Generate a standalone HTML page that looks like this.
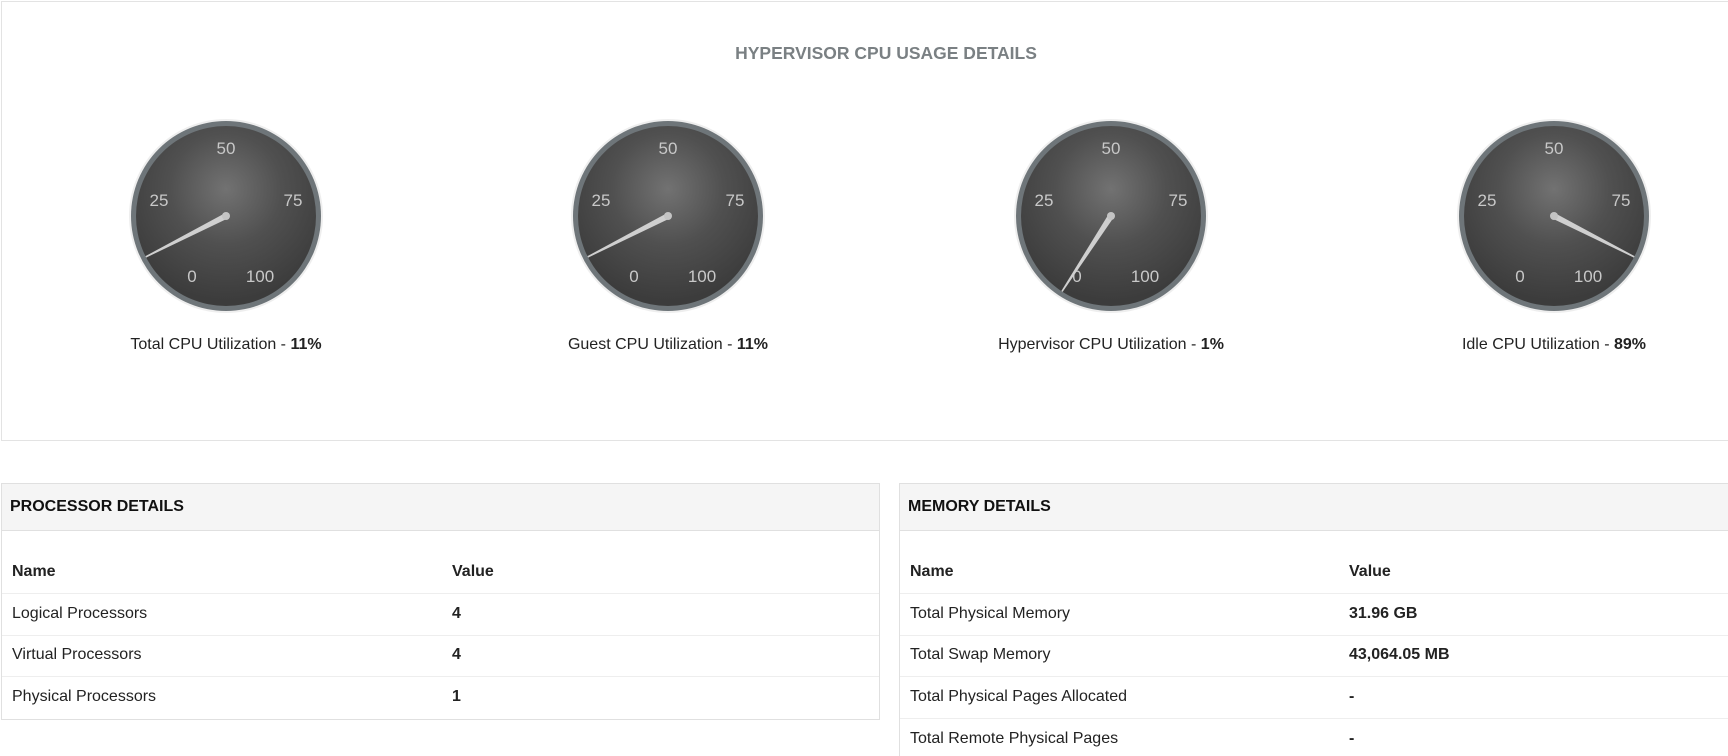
<!DOCTYPE html>
<html style="height:756px;overflow:hidden"><head><meta charset="utf-8"><style>
*{margin:0;padding:0;box-sizing:border-box}
body{width:1728px;height:756px;overflow:hidden;background:#fff;font-family:"Liberation Sans",Arial,sans-serif;color:#222;position:relative}
.top{position:absolute;left:1px;top:1px;width:1740px;height:440px;border:1px solid #e3e3e3}
.title{position:absolute;left:0;width:1772px;top:43px;text-align:center;font-weight:bold;font-size:17.5px;color:#7a8083}
.g{position:absolute;top:116px;width:200px;height:200px}
.lab{position:absolute;top:336px;width:400px;text-align:center;font-size:16px;color:#222}
.panel{position:absolute;top:483px;border:1px solid #e0e0e0;background:#fff;overflow:hidden}
.hd{height:47px;background:#f5f5f5;border-bottom:1px solid #e0e0e0;font-weight:bold;font-size:16px;line-height:45px;padding-left:8px;color:#111}
.row{position:absolute;left:0;right:0;height:42px;border-bottom:1px solid #eee;font-size:16px}
.row span{position:absolute;top:11px}
.b{font-weight:bold}
</style></head><body>
<div class="top"></div>
<div class="title">HYPERVISOR CPU USAGE DETAILS</div>

<svg width="0" height="0" style="position:absolute"><defs>
<radialGradient id="face" cx="50%" cy="35%" r="62%"><stop offset="0" stop-color="#727272"/><stop offset="0.5" stop-color="#505050"/><stop offset="1" stop-color="#3c3c3c"/></radialGradient>
</defs></svg>

<svg class="g" style="left:126px" viewBox="-100 -100 200 200">
<circle r="97" fill="#ddd" opacity=".5"/><circle r="95" fill="#6e7579"/><circle r="90" fill="url(#face)"/>
<g fill="#c8c8c8" font-size="17" text-anchor="middle" font-family="Liberation Sans,sans-serif"><text y="-62">50</text><text x="-67" y="-10">25</text><text x="67" y="-10">75</text><text x="-34" y="66">0</text><text x="34" y="66">100</text></g>
<g transform="rotate(243)"><polygon points="-3,0 3,0 0.8,-90 -0.8,-90" fill="#cfcfcf"/></g><circle r="4" fill="#c4c4c4"/>
</svg>
<svg class="g" style="left:568px" viewBox="-100 -100 200 200">
<circle r="97" fill="#ddd" opacity=".5"/><circle r="95" fill="#6e7579"/><circle r="90" fill="url(#face)"/>
<g fill="#c8c8c8" font-size="17" text-anchor="middle" font-family="Liberation Sans,sans-serif"><text y="-62">50</text><text x="-67" y="-10">25</text><text x="67" y="-10">75</text><text x="-34" y="66">0</text><text x="34" y="66">100</text></g>
<g transform="rotate(243)"><polygon points="-3,0 3,0 0.8,-90 -0.8,-90" fill="#cfcfcf"/></g><circle r="4" fill="#c4c4c4"/>
</svg>
<svg class="g" style="left:1011px" viewBox="-100 -100 200 200">
<circle r="97" fill="#ddd" opacity=".5"/><circle r="95" fill="#6e7579"/><circle r="90" fill="url(#face)"/>
<g fill="#c8c8c8" font-size="17" text-anchor="middle" font-family="Liberation Sans,sans-serif"><text y="-62">50</text><text x="-67" y="-10">25</text><text x="67" y="-10">75</text><text x="-34" y="66">0</text><text x="34" y="66">100</text></g>
<g transform="rotate(213)"><polygon points="-3,0 3,0 0.8,-90 -0.8,-90" fill="#cfcfcf"/></g><circle r="4" fill="#c4c4c4"/>
</svg>
<svg class="g" style="left:1454px" viewBox="-100 -100 200 200">
<circle r="97" fill="#ddd" opacity=".5"/><circle r="95" fill="#6e7579"/><circle r="90" fill="url(#face)"/>
<g fill="#c8c8c8" font-size="17" text-anchor="middle" font-family="Liberation Sans,sans-serif"><text y="-62">50</text><text x="-67" y="-10">25</text><text x="67" y="-10">75</text><text x="-34" y="66">0</text><text x="34" y="66">100</text></g>
<g transform="rotate(117)"><polygon points="-3,0 3,0 0.8,-90 -0.8,-90" fill="#cfcfcf"/></g><circle r="4" fill="#c4c4c4"/>
</svg>

<div class="lab" style="left:26px">Total CPU Utilization - <b>11%</b></div>
<div class="lab" style="left:468px">Guest CPU Utilization - <b>11%</b></div>
<div class="lab" style="left:911px">Hypervisor CPU Utilization - <b>1%</b></div>
<div class="lab" style="left:1354px">Idle CPU Utilization - <b>89%</b></div>

<div class="panel" style="left:1px;width:879px;height:237px">
<div class="hd">PROCESSOR DETAILS</div>
<div class="row b" style="top:68px"><span style="left:10px">Name</span><span style="left:450px">Value</span></div>
<div class="row" style="top:110px"><span style="left:10px">Logical Processors</span><span class="b" style="left:450px">4</span></div>
<div class="row" style="top:151px"><span style="left:10px">Virtual Processors</span><span class="b" style="left:450px">4</span></div>
<div class="row" style="top:193px;border-bottom:none"><span style="left:10px">Physical Processors</span><span class="b" style="left:450px">1</span></div>
</div>

<div class="panel" style="left:899px;width:840px;height:273px;border-bottom:none">
<div class="hd">MEMORY DETAILS</div>
<div class="row b" style="top:68px"><span style="left:10px">Name</span><span style="left:449px">Value</span></div>
<div class="row" style="top:110px"><span style="left:10px">Total Physical Memory</span><span class="b" style="left:449px">31.96 GB</span></div>
<div class="row" style="top:151px"><span style="left:10px">Total Swap Memory</span><span class="b" style="left:449px">43,064.05 MB</span></div>
<div class="row" style="top:193px"><span style="left:10px">Total Physical Pages Allocated</span><span class="b" style="left:449px">-</span></div>
<div class="row" style="top:235px"><span style="left:10px">Total Remote Physical Pages</span><span class="b" style="left:449px">-</span></div>
</div>
</body></html>
